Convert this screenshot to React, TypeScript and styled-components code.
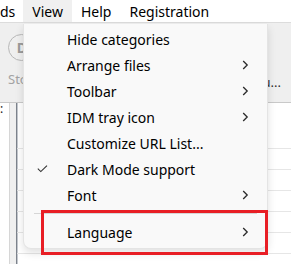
import React from "react";
import styled, { createGlobalStyle } from "styled-components";

const GlobalStyle = createGlobalStyle`
  html, body { margin: 0; padding: 0; background: #fff; }
  body { font-family: "Noto Sans", "Segoe UI", sans-serif; }
`;

const Screen = styled.div`
  position: relative;
  width: 291px;
  height: 264px;
  overflow: hidden;
  background: #fff;
  display: flex;
  flex-direction: column;
`;

const MenuBar = styled.div`
  height: 22px;
  flex-shrink: 0;
  display: flex;
  align-items: stretch;
  background: #fff;
  border-bottom: 1px solid #dcdcdc;
`;

const MenuBarItem = styled.div<{ $active?: boolean; $first?: boolean }>`
  display: flex;
  align-items: center;
  padding: ${(p) => (p.$first ? "0 8px 0 0" : "0 9px")};
  font-size: 14px;
  color: #000;
  white-space: nowrap;
  background: ${(p) => (p.$active ? "#f0f0f0" : "transparent")};
`;

const Toolbar = styled.div`
  height: 79px;
  flex-shrink: 0;
  display: flex;
  justify-content: space-between;
  align-items: flex-start;
  padding: 0 10px 0 8px;
  background: #efefef;
  border-bottom: 1px solid #c9c9c9;
`;

const ToolButton = styled.div`
  display: flex;
  flex-direction: column;
  align-items: center;
  padding-top: 11px;
  gap: 9px;
`;

const ToolIcon = styled.div`
  width: 25px;
  height: 25px;
  border-radius: 50%;
  border: 1.5px solid #b8b8b8;
  display: flex;
  align-items: center;
  justify-content: center;
  font-size: 14px;
  font-weight: 700;
  color: #9a9a9a;
`;

const ToolLabel = styled.span`
  font-size: 13px;
  color: #a3a3a3;
  white-space: nowrap;
`;

const RightToolLabel = styled(ToolLabel)`
  margin-top: 50px;
  color: #303030;
`;

const Content = styled.div`
  flex: 1;
  display: flex;
  background: #f0f0f0;
`;

const CategoryPane = styled.div`
  width: 9px;
  background: #fff;
  border-right: 1px solid #d6d6d6;
  font-size: 12px;
  line-height: 1;
  color: #222;
  overflow: hidden;
`;

const PaneGap = styled.div`
  width: 6px;
`;

const ListPane = styled.div`
  flex: 1;
  background: #fff;
  border-left: 1px solid #7d838c;
  box-shadow: inset 1px 0 0 #c4c8ce;
  display: flex;
  flex-direction: column;
`;

const ListHeader = styled.div`
  height: 45px;
  border-bottom: 1px solid #e6e6e6;
`;

const ListRow = styled.div`
  height: 20px;
  border-bottom: 1px solid #e6e6e6;
`;

const Popup = styled.div`
  position: absolute;
  left: 23px;
  top: 24px;
  width: 245px;
  box-sizing: border-box;
  padding: 2px 0 3px;
  background: #f9f9f9;
  border: 1px solid #e4e4e4;
  border-top: none;
  border-radius: 0 0 8px 8px;
  box-shadow: 0 4px 8px rgba(0, 0, 0, 0.12);
`;

const Item = styled.div`
  height: 26px;
  display: flex;
  align-items: center;
  padding: 0 18px 0 13px;
`;

const CheckSlot = styled.div`
  width: 30px;
  display: flex;
  align-items: center;
`;

const ItemLabel = styled.span`
  flex: 1;
  font-size: 14px;
  color: #000;
  white-space: nowrap;
`;

const Separator = styled.div`
  height: 1px;
  margin: 5px 10px;
  background: #d6d6d6;
`;

const Highlight = styled.div`
  position: absolute;
  left: 41px;
  top: 210px;
  width: 227px;
  height: 45px;
  box-sizing: border-box;
  border: 3px solid #e81e25;
`;

const Check = () => (
  <svg width="11" height="8" viewBox="0 0 11 8">
    <path d="M0.8 3.6 L3.8 6.6 L10 0.6" fill="none" stroke="#333" strokeWidth="1.1" />
  </svg>
);

const Chevron = () => (
  <svg width="7" height="10" viewBox="0 0 7 10">
    <path d="M1.2 1 L5.2 5 L1.2 9" fill="none" stroke="#2a2a2a" strokeWidth="1.3" />
  </svg>
);

type Entry = { label: string; sub?: boolean; checked?: boolean } | "sep";

const entries: Entry[] = [
  { label: "Hide categories" },
  { label: "Arrange files", sub: true },
  { label: "Toolbar", sub: true },
  { label: "IDM tray icon", sub: true },
  { label: "Customize URL List..." },
  { label: "Dark Mode support", checked: true },
  { label: "Font", sub: true },
  "sep",
  { label: "Language", sub: true },
];

export default function App() {
  return (
    <Screen>
      <GlobalStyle />
      <MenuBar>
        <MenuBarItem $first>ds</MenuBarItem>
        <MenuBarItem $active>View</MenuBarItem>
        <MenuBarItem>Help</MenuBarItem>
        <MenuBarItem>Registration</MenuBarItem>
      </MenuBar>
      <Toolbar>
        <ToolButton>
          <ToolIcon>D</ToolIcon>
          <ToolLabel>Stop</ToolLabel>
        </ToolButton>
        <RightToolLabel>Start Qu...</RightToolLabel>
      </Toolbar>
      <Content>
        <CategoryPane>:</CategoryPane>
        <PaneGap />
        <ListPane>
          <ListHeader />
          {Array.from({ length: 6 }).map((_, i) => (
            <ListRow key={i} />
          ))}
        </ListPane>
      </Content>
      <Popup>
        {entries.map((e, i) =>
          e === "sep" ? (
            <Separator key={i} />
          ) : (
            <Item key={i}>
              <CheckSlot>{e.checked && <Check />}</CheckSlot>
              <ItemLabel>{e.label}</ItemLabel>
              {e.sub && <Chevron />}
            </Item>
          )
        )}
      </Popup>
      <Highlight />
    </Screen>
  );
}
